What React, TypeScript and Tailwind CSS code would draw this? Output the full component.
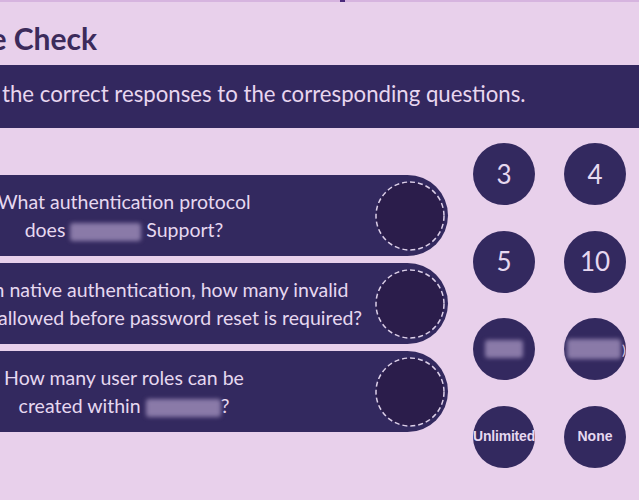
import React from "react";

const Blur = ({ w, h = 18 }: { w: number; h?: number }) => (
  <span
    className="inline-block align-middle rounded-[3px] bg-[#8a7aa8] blur-[2px]"
    style={{ width: w, height: h }}
  />
);

const DashedCircle = () => (
  <svg width="70" height="70" viewBox="0 0 70 70" className="shrink-0">
    <circle cx="35" cy="35" r="34" fill="#2b1d4b" stroke="#dccfe8" strokeWidth="1.5" strokeDasharray="5 3" />
  </svg>
);

const Pill = ({ children }: { children: React.ReactNode }) => (
  <div className="flex h-[81px] w-[575px] items-center rounded-full bg-[#33295f] pr-[3px]">
    <div className="w-[502px] shrink-0 whitespace-nowrap text-center text-[19.5px] leading-[28px] text-[#e6d8f0]">
      {children}
    </div>
    <DashedCircle />
  </div>
);

const Bubble = ({ children, className = "" }: { children: React.ReactNode; className?: string }) => (
  <div
    className={`flex h-[62px] w-[62px] items-center justify-center rounded-full bg-[#33295f] text-[#e6d8f0] ${className}`}
  >
    {children}
  </div>
);

export default function App() {
  return (
    <div
      className="flex h-[500px] w-[639px] flex-col overflow-hidden bg-[#e8d0eb]"
      style={{ fontFamily: "Lato, 'Open Sans', sans-serif" }}
    >
      <div className="h-[2px] w-full shrink-0 bg-[#d6b4df]">
        <div className="ml-[340px] h-full w-[5px] bg-[#4b2a7c]" />
      </div>
      <div className="h-[63px] shrink-0 pt-[21px]">
        <div className="ml-[-203px] w-[300px] whitespace-nowrap text-right text-[30px] font-bold leading-[30px] text-[#3c2b5b]">
          Knowledge Check
        </div>
      </div>
      <div className="flex h-[63px] shrink-0 items-center bg-[#33285f] pl-[2px] pb-[6px]">
        <div className="whitespace-nowrap text-[22.2px] leading-[22px] text-[#e8d6ef]">
          the correct responses to the corresponding questions.
        </div>
      </div>
      <div className="flex flex-1">
        <div className="ml-[-127px] flex flex-col gap-[7px] pt-[47px]">
          <Pill>
            What authentication protocol
            <br />
            does <Blur w={71} /> Support?
          </Pill>
          <Pill>
            For users on native authentication, how many invalid
            <br />
            attempts are allowed before password reset is required?
          </Pill>
          <Pill>
            How many user roles can be
            <br />
            created within <Blur w={75} />?
          </Pill>
        </div>
        <div className="ml-[25px] grid h-fit grid-cols-[62px_62px] gap-x-[29px] gap-y-[25.5px] pt-[15px]">
          <Bubble className="text-[26px]">3</Bubble>
          <Bubble className="text-[26px]">4</Bubble>
          <Bubble className="text-[26px]">5</Bubble>
          <Bubble className="text-[26px]">10</Bubble>
          <Bubble>
            <Blur w={38} h={18} />
          </Bubble>
          <Bubble className="justify-start pl-[3px] text-[14px]">
            <Blur w={54} h={20} />
            <span className="ml-[1px]">)</span>
          </Bubble>
          <Bubble className="text-[14px] font-bold tracking-[-0.2px] [font-family:'Liberation_Sans',Arial,sans-serif]">
            Unlimited
          </Bubble>
          <Bubble className="text-[14px] font-bold [font-family:'Liberation_Sans',Arial,sans-serif]">
            None
          </Bubble>
        </div>
      </div>
    </div>
  );
}
